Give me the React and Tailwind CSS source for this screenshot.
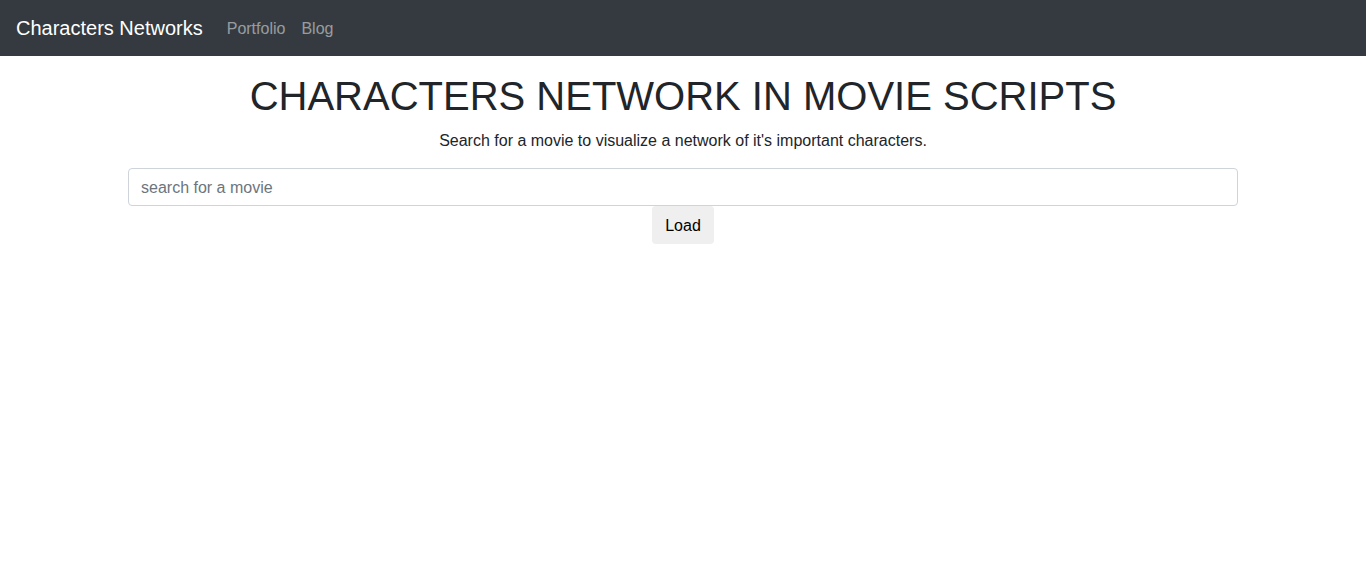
import { useState } from 'react'

function App() {
  const [query, setQuery] = useState('')

  return (
    <div className="min-h-screen bg-white text-[#212529] font-['Liberation_Sans',Arial,sans-serif]">
      <nav className="h-14 bg-[#343a40] flex items-center px-4">
        <a href="#" className="text-white text-xl leading-[30px] mr-4">Characters Networks</a>
        <div className="flex pt-px">
          <a href="#" className="px-2 text-base text-white/50">Portfolio</a>
          <a href="#" className="px-2 text-base text-white/50">Blog</a>
        </div>
      </nav>
      <div className="max-w-[1140px] mx-auto px-[15px] pt-4 flex flex-col items-center">
        <h1 className="text-[40px] leading-[48px] mb-2 text-center">CHARACTERS NETWORK IN MOVIE SCRIPTS</h1>
        <p className="text-base leading-6 pt-px mb-[15px] text-center">Search for a movie to visualize a network of it's important characters.</p>
        <input
          type="text"
          placeholder="search for a movie"
          value={query}
          onChange={e => setQuery(e.target.value)}
          className="w-full h-[38px] px-3 pt-[2px] text-base border border-[#ced4da] rounded placeholder:text-[#6c757d] focus:outline-none"
        />
        <button className="h-[38px] px-[13px] pt-[2px] text-base text-black bg-[#efefef] rounded">Load</button>
      </div>
    </div>
  )
}

export default App
